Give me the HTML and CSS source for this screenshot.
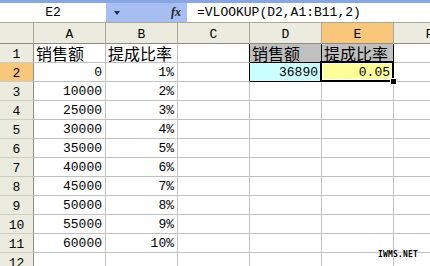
FILE: index.html
```html
<!DOCTYPE html>
<html lang="zh-CN">
<head>
    <meta charset="UTF-8">
    <title>VLOOKUP</title>
    <link rel="stylesheet" href="styles.css">
</head>
<body>
    <div class="topstripe"></div>
    <div class="formula-bar">
        <div class="namebox">E2</div>
        <div class="fbtns">
            <span class="arrow"></span>
            <span class="fx">fx</span>
        </div>
        <div class="formula">=VLOOKUP(D2,A1:B11,2)</div>
    </div>

    <div class="sheet">
        <div class="c corner"></div>
        <div class="c hd">A</div>
        <div class="c hd">B</div>
        <div class="c hd">C</div>
        <div class="c hd">D</div>
        <div class="c hd sel">E</div>
        <div class="c hd">F</div>

        <div class="c rh">1</div>
        <div class="c cn">销售额</div>
        <div class="c cn">提成比率</div>
        <div class="c edge"></div>
        <div class="c cn gray box">销售额</div>
        <div class="c cn gray box">提成比率</div>
        <div class="c"></div>

        <div class="c rh sel">2</div>
        <div class="c r">0</div>
        <div class="c r">1%</div>
        <div class="c edge"></div>
        <div class="c r cyan box">36890</div>
        <div class="c r yellow box active">0.05</div>
        <div class="c"></div>

        <div class="c rh">3</div><div class="c r">10000</div><div class="c r">2%</div><div class="c"></div><div class="c"></div><div class="c"></div><div class="c"></div>
        <div class="c rh">4</div><div class="c r">25000</div><div class="c r">3%</div><div class="c"></div><div class="c"></div><div class="c"></div><div class="c"></div>
        <div class="c rh">5</div><div class="c r">30000</div><div class="c r">4%</div><div class="c"></div><div class="c"></div><div class="c"></div><div class="c"></div>
        <div class="c rh">6</div><div class="c r">35000</div><div class="c r">5%</div><div class="c"></div><div class="c"></div><div class="c"></div><div class="c"></div>
        <div class="c rh">7</div><div class="c r">40000</div><div class="c r">6%</div><div class="c"></div><div class="c"></div><div class="c"></div><div class="c"></div>
        <div class="c rh">8</div><div class="c r">45000</div><div class="c r">7%</div><div class="c"></div><div class="c"></div><div class="c"></div><div class="c"></div>
        <div class="c rh">9</div><div class="c r">50000</div><div class="c r">8%</div><div class="c"></div><div class="c"></div><div class="c"></div><div class="c"></div>
        <div class="c rh">10</div><div class="c r">55000</div><div class="c r">9%</div><div class="c"></div><div class="c"></div><div class="c"></div><div class="c"></div>
        <div class="c rh">11</div><div class="c r">60000</div><div class="c r">10%</div><div class="c"></div><div class="c"></div><div class="c"></div><div class="c"></div>
        <div class="c rh">12</div><div class="c"></div><div class="c"></div><div class="c"></div><div class="c"></div><div class="c"></div><div class="c"></div>
    </div>

    <div class="watermark">IWMS.NET</div>
</body>
</html>
```

FILE: styles.css
```css
html, body {
    margin: 0;
    padding: 0;
}
body {
    width: 430px;
    height: 266px;
    overflow: hidden;
    position: relative;
    background: #fff;
    font-family: "Liberation Mono", "Noto Sans CJK SC", monospace;
    font-size: 13px;
    color: #000;
}
.topstripe {
    height: 3px;
    background: #88a6e4;
}
.formula-bar {
    display: flex;
    height: 19px;
    border-bottom: 1px solid #a9a79a;
    background: #fff;
}
.namebox {
    width: 106px;
    display: flex;
    align-items: center;
    justify-content: center;
}
.fbtns {
    width: 81px;
    background: #a6bef2;
    display: flex;
    align-items: center;
    justify-content: space-between;
    padding: 0 6px 0 6px;
    box-sizing: border-box;
}
.arrow {
    width: 0;
    height: 0;
    border-left: 3px solid transparent;
    border-right: 3px solid transparent;
    border-top: 4px solid #1b2a55;
    margin-left: 2px;
}
.fx {
    font-family: "Liberation Serif", serif;
    font-style: italic;
    font-weight: bold;
    font-size: 12px;
    color: #222;
}
.formula {
    padding-left: 10px;
    display: flex;
    align-items: center;
}
.sheet {
    display: grid;
    grid-template-columns: 34px repeat(6, 72px);
    grid-template-rows: 21px;
    grid-auto-rows: 19px;
    width: 466px;
}
.c {
    box-sizing: border-box;
    border-right: 1px solid #c0c0c0;
    border-bottom: 1px solid #c0c0c0;
    display: flex;
    align-items: center;
    padding: 0 3px 0 2px;
    white-space: nowrap;
    position: relative;
}
.r {
    justify-content: flex-end;
}
.cn {
    font-family: "Noto Sans CJK SC", sans-serif;
    font-size: 16px;
}
.hd, .corner {
    background: #ecebdf;
    border-right-color: #aca899;
    border-bottom-color: #8f8d82;
    justify-content: center;
    padding: 2px 0 0 0;
}
.rh {
    background: #ecebdf;
    border-right-color: #8f8d82;
    border-bottom-color: #cfcdc0;
    justify-content: center;
    padding: 2px 0 0 0;
}
.sel {
    background: #f8c77c;
}
.edge {
    border-right-color: #000;
}
.box {
    border-right-color: #000;
    border-bottom-color: #000;
}
.gray {
    background: #c0c0c0;
}
.cyan {
    background: #ccffff;
}
.yellow {
    background: #ffff99;
}
.active::after {
    content: "";
    position: absolute;
    left: -2px;
    top: -2px;
    right: -1px;
    bottom: -1px;
    border: 2px solid #000;
    box-shadow: inset 0 0 0 1px #fff;
}
.active::before {
    content: "";
    position: absolute;
    right: -4px;
    bottom: -4px;
    width: 5px;
    height: 5px;
    background: #000;
    border: 1px solid #fff;
    z-index: 2;
}
.watermark {
    position: absolute;
    left: 378px;
    top: 250px;
    font-family: "DejaVu Sans Mono", monospace;
    font-weight: bold;
    font-size: 8px;
    letter-spacing: 0.2px;
    color: #000;
    text-shadow: 1px 0 #fff, -1px 0 #fff, 0 1px #fff, 0 -1px #fff;
}
```
